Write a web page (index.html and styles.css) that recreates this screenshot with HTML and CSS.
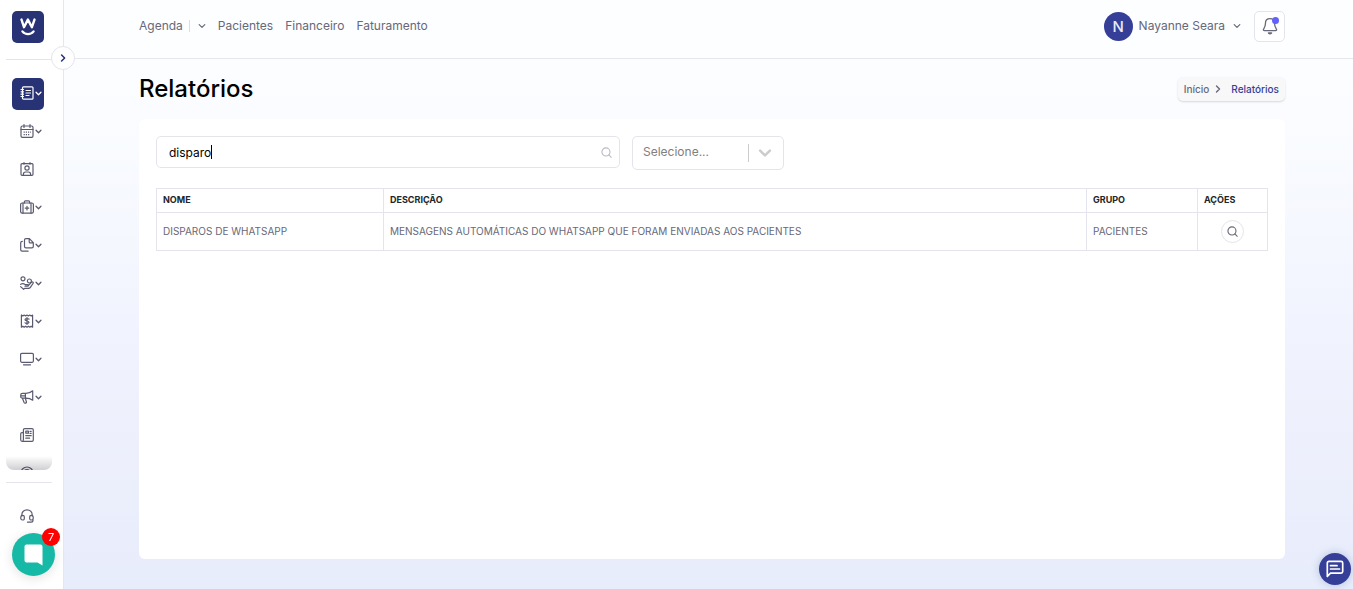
FILE: index.html
```html
<!DOCTYPE html>
<html lang="pt-BR">
<head>
    <meta charset="UTF-8">
    <meta name="viewport" content="width=device-width, initial-scale=1.0">
    <title>Relatórios</title>
    <link rel="stylesheet" href="styles.css">
</head>
<body>
    <!-- Shared icons -->
    <svg class="sprite" aria-hidden="true">
        <symbol id="chevron" viewBox="0 0 8 8"><path d="M1.2 2.6 4 5.4l2.8-2.8"/></symbol>
        <symbol id="search" viewBox="0 0 12 12"><circle cx="5.4" cy="5.4" r="4.4"/><path d="m8.6 8.6 2.6 2.6"/></symbol>
    </svg>

    <aside class="sidebar">
        <a href="#" class="logo" aria-label="Página inicial">
            <svg viewBox="0 0 32 32">
                <path d="M9.5 8.6 12 16.2 15.900 8.600l4 7.600 2.600-7.600" stroke-width="2.4"/>
                <path d="M10.400 20.400c2.800 3.600 8.400 3.600 11.200 0" stroke-width="2.300"/>
            </svg>
        </a>
        <hr class="divider">
        <button type="button" class="toggle" aria-label="Expandir menu">
            <svg viewBox="0 0 8 8"><path d="M2.6 1 5.6 4l-3 3"/></svg>
        </button>

        <nav class="menu">
            <a href="#" class="menu-item active" aria-label="Relatórios">
                <svg class="icon" viewBox="0 0 14 14"><rect x="2.5" y=".8" width="10.5" height="12.4" rx="1"/><path d="M1 3.500h2.500M1 5.800h2.500M1 8.200h2.500M1 10.500h2.500M6 4.500h4.500M6 7h4.500M6 9.500h3"/></svg>
                <svg class="arrow"><use href="#chevron"/></svg>
            </a>
            <a href="#" class="menu-item" aria-label="Agenda">
                <svg class="icon" viewBox="0 0 14 14"><rect x="1" y="2" width="12" height="11.3" rx="1.4"/><path d="M1 5.5h12M4 .6v2.800M10 .6v2.800"/><path class="dots" d="M3.6 8.2h1.2m1 0H7m1 0h1.2m1 0h.8M3.6 10.6h1.2m1 0H7m1 0h1.2"/></svg>
                <svg class="arrow"><use href="#chevron"/></svg>
            </a>
            <a href="#" class="menu-item" aria-label="Pacientes">
                <svg class="icon" viewBox="0 0 14 14"><rect x="1" y="1.7" width="12" height="11.6" rx="1"/><circle cx="7" cy="6" r="2.1"/><path d="M3.4 13v-.8c0-1.4 1-2.2 2.2-2.2h2.8c1.2 0 2.2.8 2.2 2.2v.8M4 .6v1.600M10 .6v1.600"/></svg>
            </a>
            <a href="#" class="menu-item" aria-label="Atendimento">
                <svg class="icon" viewBox="0 0 14 14"><rect x=".6" y="3" width="12.8" height="10.2" rx="1.6"/><path d="M4.4 3V1.8c0-.6.4-1 1-1h3.2c.6 0 1 .4 1 1V3M3 3v10.2M11 3v10.2M7 6.3v3.6M5.2 8.1h3.6"/></svg>
                <svg class="arrow"><use href="#chevron"/></svg>
            </a>
            <a href="#" class="menu-item" aria-label="Documentos">
                <svg class="icon" viewBox="0 0 14 14"><path d="M9.4.7H5.9c-.8 0-1.4.6-1.4 1.4v6.4c0 .8.6 1.4 1.4 1.4h6c.8 0 1.4-.6 1.4-1.4V4.6zM9.2.9v3c0 .6.3.9.9.9h3M2.3 3.4c-.9 0-1.6.6-1.6 1.4v7c0 .8.6 1.4 1.4 1.4h6"/></svg>
                <svg class="arrow"><use href="#chevron"/></svg>
            </a>
            <a href="#" class="menu-item" aria-label="Financeiro">
                <svg class="icon" viewBox="0 0 14 14"><circle cx="3" cy="2.8" r="2"/><circle cx="9.4" cy="5" r="2"/><path d="M.6 8.4c1.8-1.4 3.2-1 4.6.2h2.4c1.2 0 1.2 1.6 0 1.6H5M8.6 9.4l3-3.2c1-.8 2.2.2 1.4 1.3l-2.6 3.8c-.5.7-1.2 1-2 1H4.6l-1 1L.6 10.6"/></svg>
                <svg class="arrow"><use href="#chevron"/></svg>
            </a>
            <a href="#" class="menu-item" aria-label="Faturamento">
                <svg class="icon" viewBox="0 0 14 14"><path d="M1.4 1v12.2l1.4-1 1.4 1 1.4-1 1.4 1 1.4-1 1.4 1 1.4-1 1.4 1V1l-1.4.9L9.8 1l-1.4.9L7 1l-1.4.9L4.2 1l-1.4.9z"/><path d="M9 5.2C8.5 4.5 5 4.3 5 5.8c0 1.500 4 .9 4 2.500 0 1.500-3.500 1.300-4 .5M7 3.600v6.800"/></svg>
                <svg class="arrow"><use href="#chevron"/></svg>
            </a>
            <a href="#" class="menu-item" aria-label="Painel">
                <svg class="icon" viewBox="0 0 14 14"><rect x=".6" y="1.3" width="12.8" height="9" rx="1.2"/><path d="M3.5 12.800h7"/></svg>
                <svg class="arrow"><use href="#chevron"/></svg>
            </a>
            <a href="#" class="menu-item" aria-label="Marketing">
                <svg class="icon" viewBox="0 0 14 14"><path d="M12.7.8v9.4C10.8 8.8 8.5 8.2 6 8.2H2.4C1.4 8.2.7 7.4.7 6.4V5.2c0-1 .7-1.8 1.7-1.8H6c2.5 0 4.800-.8 6.700-2.600M5.400 3.500v4.700M2.400 8.300l1.700 4.200c.6 1.300 2.700.6 2.300-.8L5.300 8.300M.8 5.800h4.500"/></svg>
                <svg class="arrow"><use href="#chevron"/></svg>
            </a>
            <a href="#" class="menu-item" aria-label="Notícias">
                <svg class="icon" viewBox="0 0 14 14"><path d="M3.4 11.5V2c0-.7.6-1.3 1.3-1.3H12c.7 0 1.3.6 1.3 1.3v10c0 .7-.6 1.3-1.3 1.3H2.2c-.9 0-1.5-.7-1.5-1.5V6c0-.8.6-1.3 1.3-1.3h1.3M3.4 11.500c0 1.200-.5 1.800-1.200 1.800M5.800 3.200h2.600v2H5.800zM10 3.300h1.200M10 5.300h1.200M5.800 7.700h5.400M5.800 10.200h3.800"/></svg>
            </a>
            <a href="#" class="menu-item" aria-label="Configurações">
                <svg class="icon" viewBox="0 0 14 14"><circle cx="7" cy="7" r="6"/><path d="M4.500 5C5 3 9 3 9.400 5c.2 1.400-2.400 1.600-2.400 3"/></svg>
            </a>
        </nav>

        <div class="sidebar-footer">
            <hr class="divider">
            <a href="#" class="menu-item" aria-label="Suporte">
                <svg class="icon" viewBox="0 0 14 14"><path d="M1.8 7V5.9C1.8 3 4 .8 7 .8s5.200 2.200 5.200 5.100V7"/><path d="M2.700 6.300c1 0 1.600.7 1.600 1.500v2c0 1.700-3.500 1.600-3.500-.3V8c0-1 .8-1.700 1.900-1.700zM11.300 6.300c-1 0-1.600.7-1.600 1.500v2c0 1.700 3.500 1.600 3.500-.3V8c0-1-.8-1.700-1.900-1.700zM13 9.800v1.500c0 1.200-.8 1.900-1.900 1.900H7.500"/></svg>
            </a>
        </div>
    </aside>

    <div class="page">
        <header class="topbar">
            <nav class="topnav">
                <a href="#">Agenda</a>
                <button type="button" class="agenda-more" aria-label="Mais opções de agenda">
                    <svg><use href="#chevron"/></svg>
                </button>
                <a href="#">Pacientes</a>
                <a href="#">Financeiro</a>
                <a href="#">Faturamento</a>
            </nav>
            <div class="account">
                <button type="button" class="user">
                    <span class="avatar">N</span>
                    <span>Nayanne Seara</span>
                    <svg><use href="#chevron"/></svg>
                </button>
                <button type="button" class="bell" aria-label="Notificações">
                    <svg viewBox="0 0 16 18"><path d="M8 1.6C5.2 1.6 3.5 3.6 3.5 6c0 3.5-.8 4.6-1.9 6.2-.5.8 0 1.5.8 1.5h11.2c.8 0 1.3-.7.8-1.5-1.1-1.6-1.9-2.7-1.9-6.2 0-2.4-1.7-4.4-4.5-4.4zM6.4 16c.8.8 2.4.8 3.2 0z"/></svg>
                    <span class="bell-dot"></span>
                </button>
            </div>
        </header>

        <main class="content">
            <div class="heading">
                <h1>Relatórios</h1>
                <nav class="breadcrumb" aria-label="Navegação">
                    <a href="#">Início</a>
                    <svg viewBox="0 0 8 8"><path d="M2.5 1 5.500 4l-3 3"/></svg>
                    <a href="#" class="current">Relatórios</a>
                </nav>
            </div>

            <section class="card">
                <form class="filters">
                    <div class="search">
                        <input type="text" value="disparo" aria-label="Pesquisar relatório">
                        <span class="caret"></span>
                        <svg><use href="#search"/></svg>
                    </div>
                    <div class="group-select">
                        <select aria-label="Grupo">
                            <option>Selecione...</option>
                            <option>Pacientes</option>
                        </select>
                        <svg><use href="#chevron"/></svg>
                    </div>
                </form>

                <table>
                    <thead>
                        <tr>
                            <th class="col-name">Nome</th>
                            <th>Descrição</th>
                            <th class="col-group">Grupo</th>
                            <th class="col-actions">Ações</th>
                        </tr>
                    </thead>
                    <tbody>
                        <tr>
                            <td>Disparos de WhatsApp</td>
                            <td>Mensagens automáticas do WhatsApp que foram enviadas aos pacientes</td>
                            <td>Pacientes</td>
                            <td class="actions">
                                <button type="button" aria-label="Visualizar"><svg><use href="#search"/></svg></button>
                            </td>
                        </tr>
                    </tbody>
                </table>
            </section>
        </main>
    </div>

    <button type="button" class="chat" aria-label="Mensagens">
        <svg viewBox="0 0 20 22"><path d="M2.5.5h14a2 2 0 0 1 2 2v19l-5-3h-11a2 2 0 0 1-2-2v-14a2 2 0 0 1 2-2z"/></svg>
        <span class="chat-count">7</span>
    </button>

    <button type="button" class="help" aria-label="Ajuda">
        <svg viewBox="0 0 18 18"><path d="M1.3 16.500V3c0-.9.700-1.600 1.600-1.600h12.200c.9 0 1.600.7 1.600 1.600v8.600c0 .9-.7 1.600-1.600 1.600H4.500zM4.500 5.700h6.500M4.500 9h9"/></svg>
    </button>
</body>
</html>
```

FILE: styles.css
```css
* {
    box-sizing: border-box;
}
body {
    margin: 0;
    min-height: 100vh;
    display: flex;
    font-family: Inter, "Liberation Sans", sans-serif;
    font-size: 12px;
    line-height: 20px;
    color: #676879;
    background: linear-gradient(180deg, #fdfeff 0%, #fafcff 20%, #f1f4fe 55%, #ebeefb 85%, #e8edfb 100%);
}
a {
    color: inherit;
    text-decoration: none;
}
button {
    font: inherit;
    color: inherit;
    padding: 0;
    border: none;
    background: none;
    cursor: pointer;
}
svg {
    fill: none;
    stroke: currentColor;
    stroke-width: 1.2;
    stroke-linecap: round;
    stroke-linejoin: round;
}
.sprite {
    position: absolute;
    width: 0;
    height: 0;
}

/* Sidebar */
.sidebar {
    position: sticky;
    top: 0;
    flex: none;
    display: flex;
    flex-direction: column;
    width: 64px;
    height: 100vh;
    padding: 11px 11px 0 6px;
    background: #fff;
    border-right: 1px solid #e6e7ec;
}
.logo {
    width: 32px;
    height: 32px;
    margin: 0 0 16px 6px;
    border-radius: 5px;
    background: #273375;
    color: #fff;
}
.logo svg {
    display: block;
}
.divider {
    width: 100%;
    height: 1px;
    margin: 0;
    border: none;
    background: #e4e4ec;
}
.toggle {
    position: absolute;
    top: 46px;
    right: -12px;
    z-index: 2;
    display: flex;
    align-items: center;
    justify-content: center;
    width: 24px;
    height: 24px;
    border: 1px solid #e4e4ec;
    border-radius: 50%;
    background: #fff;
    color: #273375;
}
.toggle svg {
    width: 8px;
    height: 8px;
    stroke-width: 1.5;
}
.menu {
    position: relative;
    flex: 1;
    display: flex;
    flex-direction: column;
    gap: 6px;
    min-height: 0;
    margin-top: 18px;
    overflow: hidden;
    border-radius: 0 0 8px 8px;
}
.menu::after {
    content: "";
    position: absolute;
    left: 0;
    right: 0;
    bottom: 0;
    height: 14px;
    background: linear-gradient(rgba(0, 0, 0, 0), rgba(40, 40, 55, .22));
}
.menu-item {
    flex: none;
    display: flex;
    align-items: center;
    width: 32px;
    height: 32px;
    margin-left: 6px;
    padding: 0 0 2px 8px;
    border-radius: 5px;
    color: #5a5b70;
}
.menu-item.active {
    background: #273375;
    color: #fff;
}
.icon {
    flex: none;
    width: 14px;
    height: 14px;
}
.dots {
    stroke-linecap: butt;
}
.arrow {
    flex: none;
    width: 7px;
    height: 7px;
    margin-left: 1px;
    stroke-width: 1.5;
}
.sidebar-footer {
    height: 119px;
    padding-top: 12px;
}
.sidebar-footer .menu-item {
    margin-top: 18px;
}

/* Top bar */
.page {
    flex: 1;
    min-width: 0;
    display: flex;
    flex-direction: column;
}
.topbar {
    display: flex;
    justify-content: space-between;
    align-items: center;
    height: 59px;
    padding: 0 68px 6px 75px;
    background: #fdfeff;
    border-bottom: 1px solid #e6e7ec;
}
.topnav {
    display: flex;
    align-items: center;
    gap: 12px;
}
.agenda-more {
    display: flex;
    align-items: center;
    height: 12px;
    margin-left: -6px;
    padding-left: 8px;
    border-left: 1px solid #dcdde5;
}
.agenda-more svg,
.user svg {
    width: 8px;
    height: 8px;
}
.account {
    display: flex;
    align-items: center;
    gap: 13px;
}
.user {
    display: flex;
    align-items: center;
    gap: 6px;
}
.user svg {
    margin-left: 2px;
}
.avatar {
    width: 29px;
    height: 29px;
    border-radius: 50%;
    background: #353f98;
    color: #e9ebf8;
    font-size: 15px;
    font-weight: 500;
    line-height: 29px;
}
.bell {
    position: relative;
    display: flex;
    align-items: center;
    justify-content: center;
    width: 31px;
    height: 31px;
    border: 1px solid #e4e4ec;
    border-radius: 5px;
    background: #fff;
}
.bell svg {
    width: 16px;
    height: 18px;
    stroke-width: 1.3;
}
.bell-dot {
    position: absolute;
    top: 5px;
    right: 5px;
    width: 7px;
    height: 7px;
    border-radius: 50%;
    background: #6161ff;
}

/* Content */
.content {
    flex: 1;
    display: flex;
    flex-direction: column;
    padding: 14px 68px 30px 75px;
}
.heading {
    display: flex;
    justify-content: space-between;
    align-items: center;
    height: 32px;
    margin-bottom: 14px;
}
h1 {
    margin: 0;
    color: #000;
    font-size: 24px;
    font-weight: 500;
    line-height: 32px;
}
.breadcrumb {
    display: flex;
    align-items: center;
    gap: 5px;
    height: 24px;
    padding: 0 6px;
    border-radius: 5px;
    background: #f8f8f9;
    box-shadow: 0 1px 2px rgba(0, 0, 0, .15);
    font-size: 10px;
    font-weight: 500;
}
.breadcrumb svg {
    width: 8px;
    height: 8px;
    margin-right: 4px;
    stroke-width: 1.4;
}
.breadcrumb .current {
    color: #353f98;
}
.card {
    flex: 1;
    padding: 17px;
    border-radius: 6px;
    background: #fff;
}
.filters {
    display: flex;
    align-items: flex-start;
    gap: 12px;
    margin-bottom: 18px;
}
.search {
    position: relative;
    flex: 0 1 464px;
}
.search input {
    display: block;
    width: 100%;
    height: 32px;
    padding: 0 32px 0 12px;
    border: 1px solid #e4e4ec;
    border-radius: 5px;
    outline: none;
    background: #fff;
    color: #000;
    font: inherit;
}
.caret {
    position: absolute;
    top: 9px;
    left: 55px;
    width: 1px;
    height: 14px;
    background: #000;
}
.search svg {
    position: absolute;
    top: 11px;
    right: 8px;
    width: 11px;
    height: 11px;
    color: #b9bac6;
}
.group-select {
    position: relative;
    flex: none;
    width: 152px;
}
.group-select select {
    display: block;
    width: 100%;
    height: 34px;
    padding: 0 40px 2px 10px;
    border: 1px solid #e4e4ec;
    border-radius: 5px;
    appearance: none;
    background: #fff;
    color: #808080;
    font: inherit;
}
.group-select::after {
    content: "";
    position: absolute;
    top: 8px;
    right: 35px;
    width: 1px;
    height: 18px;
    background: #ccc;
}
.group-select svg {
    position: absolute;
    top: 10px;
    right: 12px;
    width: 14px;
    height: 14px;
    color: #ccc;
    stroke-width: 1.4;
    pointer-events: none;
}

table {
    width: 100%;
    table-layout: fixed;
    border-collapse: collapse;
    text-transform: uppercase;
}
th,
td {
    padding: 0 6px 1px;
    border: 1px solid #e4e4ec;
    text-align: left;
}
th {
    height: 24px;
    color: #212529;
    font-size: 9px;
    font-weight: 700;
    line-height: 12px;
}
td {
    height: 38px;
    font-size: 10px;
    line-height: 16px;
}
.col-name {
    width: 227px;
}
.col-group {
    width: 111px;
}
.col-actions {
    width: 70px;
}
.actions button {
    display: flex;
    align-items: center;
    justify-content: center;
    width: 23px;
    height: 23px;
    margin: 0 auto;
    border: 1px solid #e4e4ec;
    border-radius: 50%;
}
.actions svg {
    width: 11px;
    height: 11px;
}

/* Floating buttons */
.chat {
    position: fixed;
    left: 12px;
    bottom: 13px;
    z-index: 3;
    display: flex;
    align-items: center;
    justify-content: center;
    width: 43px;
    height: 43px;
    border-radius: 50%;
    background: #16b8a6;
    box-shadow: 0 2px 12px rgba(0, 0, 0, .12);
}
.chat svg {
    width: 20px;
    height: 22px;
    fill: #fff;
    stroke: none;
}
.chat-count {
    position: absolute;
    top: -5px;
    right: -5px;
    width: 18px;
    height: 18px;
    border-radius: 50%;
    background: #f00;
    color: #fff;
    font-size: 11px;
    line-height: 18px;
}
.help {
    position: fixed;
    right: 2px;
    bottom: 4px;
    display: flex;
    align-items: center;
    justify-content: center;
    width: 32px;
    height: 32px;
    border-radius: 50%;
    background: #353f98;
    color: #fff;
    box-shadow: 0 0 8px rgba(53, 90, 152, .3);
}
.help svg {
    width: 18px;
    height: 18px;
    stroke-width: 1.7;
}
```
